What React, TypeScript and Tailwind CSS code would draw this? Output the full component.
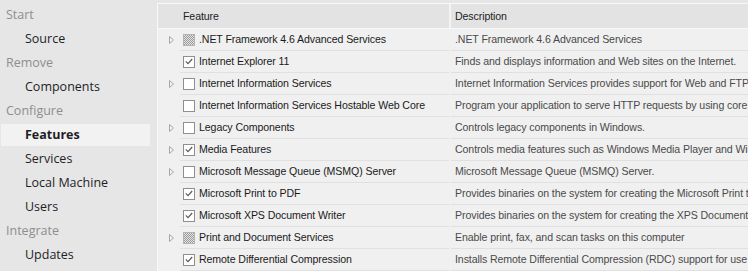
import { ReactNode } from 'react';

type CheckState = 'on' | 'off' | 'mixed';

type Feature = {
  name: string;
  desc: string;
  state: CheckState;
  expandable: boolean;
};

const NAV: { label: string; items: string[] }[] = [
  { label: 'Start', items: ['Source'] },
  { label: 'Remove', items: ['Components'] },
  { label: 'Configure', items: ['Features', 'Services', 'Local Machine', 'Users'] },
  { label: 'Integrate', items: ['Updates'] },
];

const FEATURES: Feature[] = [
  { name: '.NET Framework 4.6 Advanced Services', desc: '.NET Framework 4.6 Advanced Services', state: 'mixed', expandable: true },
  { name: 'Internet Explorer 11', desc: 'Finds and displays information and Web sites on the Internet.', state: 'on', expandable: false },
  { name: 'Internet Information Services', desc: 'Internet Information Services provides support for Web and FTP servers', state: 'off', expandable: true },
  { name: 'Internet Information Services Hostable Web Core', desc: 'Program your application to serve HTTP requests by using core IIS', state: 'off', expandable: false },
  { name: 'Legacy Components', desc: 'Controls legacy components in Windows.', state: 'off', expandable: true },
  { name: 'Media Features', desc: 'Controls media features such as Windows Media Player and Windows', state: 'on', expandable: true },
  { name: 'Microsoft Message Queue (MSMQ) Server', desc: 'Microsoft Message Queue (MSMQ) Server.', state: 'off', expandable: true },
  { name: 'Microsoft Print to PDF', desc: 'Provides binaries on the system for creating the Microsoft Print to PDF', state: 'on', expandable: false },
  { name: 'Microsoft XPS Document Writer', desc: 'Provides binaries on the system for creating the XPS Document Writer', state: 'on', expandable: false },
  { name: 'Print and Document Services', desc: 'Enable print, fax, and scan tasks on this computer', state: 'mixed', expandable: true },
  { name: 'Remote Differential Compression', desc: 'Installs Remote Differential Compression (RDC) support for use in', state: 'on', expandable: false },
];

function CheckBox({ state }: { state: CheckState }) {
  if (state === 'mixed') {
    return (
      <span className="block w-[12px] h-[12px] shrink-0 border border-[#b4b4b4] bg-[repeating-conic-gradient(#9a9a9a_0_25%,#e4e4e4_0_50%)] bg-[length:2px_2px]" />
    );
  }
  return (
    <span className="flex items-center justify-center w-[12px] h-[12px] shrink-0 border border-[#8f8f8f] bg-white">
      {state === 'on' && (
        <svg width="8" height="7" viewBox="0 0 8 7" fill="none">
          <path d="M0.8 3.4 L3 5.6 L7.2 1" stroke="#5a5a5a" strokeWidth="1.2" />
        </svg>
      )}
    </span>
  );
}

function Expander() {
  return (
    <svg width="7" height="10" viewBox="0 0 7 10" fill="none">
      <path d="M1.5 1.5 L5.5 5 L1.5 8.5 Z" stroke="#a8a8a8" strokeWidth="1" />
    </svg>
  );
}

function NavItem({ children, active }: { children: ReactNode; active?: boolean }) {
  return (
    <div
      className={
        active
          ? 'h-[22px] my-[1px] ml-[1px] mr-[7px] pl-[24px] flex items-center bg-[#f2f2f2] font-bold text-[#1e1e28]'
          : 'h-[24px] pl-[25px] flex items-center text-[#1e1e28]'
      }
    >
      {children}
    </div>
  );
}

export default function App() {
  return (
    <div className="w-[748px] h-[271px] flex overflow-hidden bg-[#e6e6e6] font-['Open_Sans',sans-serif]">
      {/* left navigation */}
      <aside className="w-[157px] shrink-0 pt-[3px] text-[12.5px]">
        {NAV.map((group) => (
          <div key={group.label}>
            <div className="h-[24px] pl-[6px] flex items-center text-[#8e8e8e]">{group.label}</div>
            {group.items.map((item) => (
              <NavItem key={item} active={item === 'Features'}>
                {item}
              </NavItem>
            ))}
          </div>
        ))}
      </aside>

      {/* feature list */}
      <main className="flex-1 min-w-0 pt-[3px] font-['Liberation_Sans',Arial,sans-serif] text-[10.6px] tracking-[-0.1px]">
        <div className="h-full border-l border-t border-[#f8f8f8] bg-[#f0f0f0] overflow-hidden">
          <div className="flex h-[25px] bg-[#e3e3e3] border-b border-[#f8f8f8] text-[#222]">
            <div className="w-[293px] shrink-0 pl-[25px] pt-[1px] flex items-center border-r-2 border-[#f3f3f3]">Feature</div>
            <div className="flex-1 pl-[4px] pt-[1px] flex items-center">Description</div>
          </div>

          {FEATURES.map((f) => (
            <div key={f.name} className="flex h-[22px]">
              <div className="w-[22px] shrink-0 flex items-center justify-end pr-[5px]">
                {f.expandable && <Expander />}
              </div>
              <div className="w-[269px] shrink-0 flex items-center gap-[4px] pl-[3px] border-b border-[#e0e0e0] text-[#1a1a1a] whitespace-nowrap overflow-hidden">
                <CheckBox state={f.state} />
                <span>{f.name}</span>
              </div>
              <div className="w-[2px] shrink-0" />
              <div className="flex-1 min-w-0 flex items-center pl-[4px] border-b border-[#e0e0e0] text-[#4a4a4a] whitespace-nowrap overflow-hidden">
                {f.desc}
              </div>
            </div>
          ))}
        </div>
      </main>
    </div>
  );
}
